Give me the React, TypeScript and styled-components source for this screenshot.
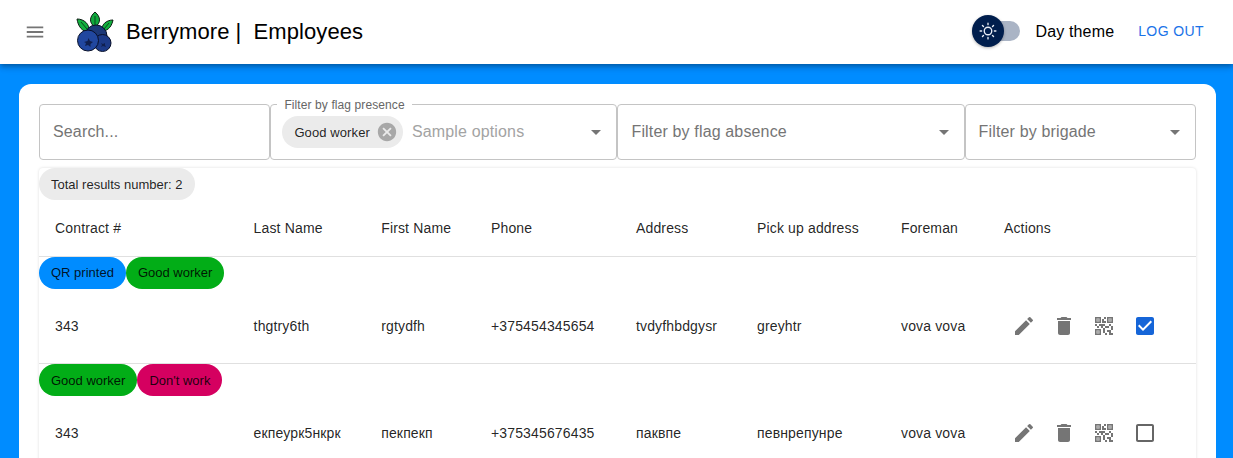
import React from "react";
import styled, { createGlobalStyle } from "styled-components";

const GlobalStyle = createGlobalStyle`
  html, body {
    margin: 0;
    height: 100%;
    overflow: hidden;
    background: #008cff;
    font-family: "Liberation Sans", Arial, sans-serif;
    color: rgba(0, 0, 0, 0.87);
  }
  * { box-sizing: border-box; }
`;

const Header = styled.header`
  position: relative;
  z-index: 2;
  height: 64px;
  display: flex;
  align-items: center;
  padding: 0 21px 0 24px;
  background: #fff;
  box-shadow: 0 2px 4px -1px rgba(0, 0, 0, 0.2), 0 4px 5px 0 rgba(0, 0, 0, 0.14), 0 1px 10px 0 rgba(0, 0, 0, 0.12);
`;
const MenuIcon = styled.svg`
  width: 22px;
  height: 22px;
  fill: #757575;
`;
const Logo = styled.svg`
  width: 38px;
  height: 42px;
  margin-left: 30px;
`;
const Title = styled.h1`
  margin: 0 0 0 12px;
  font-size: 22px;
  font-weight: 400;
  letter-spacing: 0.1px;
  word-spacing: -0.2px;
  white-space: pre;
  color: #000;
`;
const ThemeBlock = styled.div`
  margin-left: auto;
  display: flex;
  align-items: center;
`;
const Toggle = styled.div`
  position: relative;
  width: 48px;
  height: 20px;
  margin-bottom: 2px;
  border-radius: 10px;
  background: #aab4c5;
`;
const Knob = styled.div`
  position: absolute;
  left: 0;
  top: -6px;
  width: 32px;
  height: 32px;
  border-radius: 50%;
  background: #001e4d;
  display: flex;
  align-items: center;
  justify-content: center;
  box-shadow: 0 1px 3px rgba(0, 0, 0, 0.3);
`;
const ThemeLabel = styled.span`
  margin-left: 15px;
  font-size: 16px;
  letter-spacing: 0.15px;
  color: #000;
`;
const LogoutButton = styled.button`
  margin: 0 0 2px 16px;
  padding: 6px 8px;
  border: 0;
  background: none;
  font: 14px "Liberation Sans", Arial, sans-serif;
  letter-spacing: 0.4px;
  color: #1a73e8;
`;

const Card = styled.main`
  margin: 20px 17px 0 19px;
  padding: 20px;
  background: #fff;
  border-radius: 12px;
`;
const Filters = styled.div`
  display: grid;
  grid-template-columns: 2fr 3fr 3fr 2fr;
`;
const Field = styled.div`
  position: relative;
  height: 56px;
  display: flex;
  align-items: center;
  padding: 0 13px;
  border: 1px solid #c4c4c4;
  border-radius: 4px;
`;
const Placeholder = styled.span<{ $tight?: boolean }>`
  flex: 1;
  font-size: 16px;
  letter-spacing: 0.15px;
  color: ${(p) => (p.$tight ? "#a3a3a3" : "#757575")};
  margin-left: ${(p) => (p.$tight ? "9px" : "0")};
`;
const FloatLabel = styled.label`
  position: absolute;
  top: -7px;
  left: 6px;
  padding: 0 7px;
  background: #fff;
  font-size: 12px;
  line-height: 14px;
  letter-spacing: 0.1px;
  color: #666;
`;
const Caret = styled.svg`
  width: 24px;
  height: 24px;
  margin-right: -5px;
  fill: #757575;
`;
const SelectedChip = styled.div`
  display: flex;
  align-items: center;
  height: 32px;
  margin-left: -2px;
  padding: 0 5px 0 12px;
  border-radius: 16px;
  background: #ebebeb;
  font-size: 13px;
  letter-spacing: 0.1px;
  color: rgba(0, 0, 0, 0.87);
`;
const ChipClose = styled.svg`
  width: 22px;
  height: 22px;
  margin-left: 6px;
  fill: #a8a8a8;
`;

const TablePaper = styled.section`
  margin-top: 8px;
  border-radius: 4px;
  background: #fff;
  box-shadow: 0 0 3px rgba(0, 0, 0, 0.14);
`;
const ChipRow = styled.div`
  display: flex;
  height: 32px;
`;
const Chip = styled.span<{ $bg: string }>`
  display: flex;
  align-items: center;
  height: 32px;
  padding: 0 12px;
  border-radius: 16px;
  background: ${(p) => p.$bg};
  font-size: 13px;
  color: rgba(0, 0, 0, 0.87);
`;
const Table = styled.table`
  width: 100%;
  table-layout: fixed;
  border-collapse: collapse;
`;
const Col = styled.col<{ $w: number }>`
  width: ${(p) => p.$w}px;
`;
const HeadCell = styled.th`
  height: 56px;
  padding: 0 16px;
  text-align: left;
  font-size: 14px;
  font-weight: 400;
  letter-spacing: 0.15px;
  color: rgba(0, 0, 0, 0.87);
  border-bottom: 1px solid #e0e0e0;
`;
const ChipsCell = styled.td`
  height: 32px;
  padding: 0;
`;
const Cell = styled.td`
  height: 75px;
  padding: 0 16px;
  font-size: 14px;
  letter-spacing: 0.15px;
  color: rgba(0, 0, 0, 0.87);
  border-bottom: 1px solid #e0e0e0;
`;
const Actions = styled.div`
  display: flex;
  align-items: center;
  margin-left: 8px;
  gap: 16px;
`;
const ActionIcon = styled.svg`
  width: 24px;
  height: 24px;
  flex: none;
  fill: #757575;
`;
const CheckIcon = styled.svg<{ $on?: boolean }>`
  width: 24px;
  height: 24px;
  flex: none;
  margin-left: 1px;
  fill: ${(p) => (p.$on ? "#1565d8" : "#666")};
`;

const SunIcon = () => (
  <svg width="18" height="18" viewBox="0 0 24 24" fill="none" stroke="#e8edf5" strokeWidth="1.8" strokeLinecap="round">
    <circle cx="12" cy="12" r="5" />
    <path d="M12 1.5v2M12 20.5v2M1.5 12h2M20.5 12h2M4.6 4.6 6 6M18 18l1.4 1.4M4.6 19.4 6 18M18 6l1.4-1.4" />
  </svg>
);

const BerryLogo = () => (
  <Logo viewBox="0 0 38 42">
    <g stroke="#0c1a12" strokeWidth="1">
      <path d="M19 16C13 12 13 6 19 1c6 5 6 11 0 15z" fill="#0fa83c" />
      <path d="M13 21C6 21 2 15 1 8c7 0 13 5 12 13z" fill="#12b03f" />
      <path d="M26 20c7 0 10-6 11-11-7 0-12 5-11 11z" fill="#12b03f" />
      <path d="M19 15V5M11 18 5 11M28 18l5-6" fill="none" strokeWidth="0.7" />
    </g>
    <g stroke="#08102a" strokeWidth="1">
      <circle cx="20" cy="25" r="11" fill="#1c3878" />
      <circle cx="26.500" cy="32" r="8.500" fill="#1c3a88" />
      <circle cx="12" cy="29.500" r="10.500" fill="#21479f" />
    </g>
    <path d="M8 31l3.500-1 1-3 1.500 3 3 1-2.500 2v3l-2.500-2-3 1 1-3z" fill="#10204f" />
    <path d="M25 32l2 1 2-1v2l1 2-3-1-2 1 1-2z" fill="#10204f" />
  </Logo>
);

const CaretDown = () => (
  <Caret viewBox="0 0 24 24">
    <path d="M7 10l5 5 5-5z" />
  </Caret>
);

const editPath =
  "M3 17.25V21h3.75L17.81 9.94l-3.75-3.75L3 17.25zM20.71 7.04c.39-.39.39-1.02 0-1.41l-2.34-2.34a.9959.9959 0 0 0-1.41 0l-1.83 1.83 3.75 3.75 1.83-1.83z";
const deletePath = "M6 19c0 1.1.9 2 2 2h8c1.1 0 2-.9 2-2V7H6v12zM19 4h-3.5l-1-1h-5l-1 1H5v2h14V4z";
const checkedPath =
  "M19 3H5c-1.11 0-2 .9-2 2v14c0 1.1.89 2 2 2h14c1.1 0 2-.9 2-2V5c0-1.1-.9-2-2-2zm-9 14l-5-5 1.41-1.41L10 14.17l7.59-7.59L19 8l-9 9z";
const uncheckedPath =
  "M19 5v14H5V5h14m0-2H5c-1.1 0-2 .9-2 2v14c0 1.1.9 2 2 2h14c1.1 0 2-.9 2-2V5c0-1.1-.9-2-2-2z";
const qrPath =
  "M15 21h-2v-2h2v2zm-2-7h-2v5h2v-5zm8-2h-2v4h2v-4zm-2-2h-2v2h2v-2zM7 12H5v2h2v-2zm-2-2H3v2h2v-2zm7-5h2V3h-2v2z" +
  "M3 3h6v6H3zM4.500 4.500v3h3v-3z" +
  "M15 3h6v6h-6zM16.500 4.500v3h3v-3z" +
  "M3 15h6v6H3zM4.500 16.500v3h3v-3z" +
  "M19 19v-3h-4v2h2v3h4v-2h-2zm-2-7h-4v2h4v-2zm-4-2H7v2h2v2h2v-2h2v-2zm1-1V7h-2V5h-2v4h4z";
const qrInnerPath = "M4.500 4.500h3v3h-3zM16.500 4.500h3v3h-3zM4.500 16.500h3v3h-3z";

const columns = [198.6, 127.6, 109.8, 145, 121, 144, 103, 208];

type Row = {
  chips: { label: string; bg: string }[];
  cells: string[];
  checked: boolean;
};
const rows: Row[] = [
  {
    chips: [
      { label: "QR printed", bg: "#008cff" },
      { label: "Good worker", bg: "#02ad17" },
    ],
    cells: ["343", "thgtry6th", "rgtydfh", "+375454345654", "tvdyfhbdgysr", "greyhtr", "vova vova"],
    checked: true,
  },
  {
    chips: [
      { label: "Good worker", bg: "#02ad17" },
      { label: "Don't work", bg: "#d50060" },
    ],
    cells: ["343", "екпеурк5нкрк", "пекпекп", "+375345676435", "паквпе", "певнрепунре", "vova vova"],
    checked: false,
  },
];
const headers = ["Contract #", "Last Name", "First Name", "Phone", "Address", "Pick up address", "Foreman", "Actions"];

const App: React.FC = () => (
  <>
    <GlobalStyle />
    <Header>
      <MenuIcon viewBox="0 0 24 24">
        <path d="M3 18h18v-2H3v2zm0-5h18v-2H3v2zm0-7v2h18V6H3z" />
      </MenuIcon>
      <BerryLogo />
      <Title>Berrymore |  Employees</Title>
      <ThemeBlock>
        <Toggle>
          <Knob>
            <SunIcon />
          </Knob>
        </Toggle>
        <ThemeLabel>Day theme</ThemeLabel>
        <LogoutButton>LOG OUT</LogoutButton>
      </ThemeBlock>
    </Header>
    <Card>
      <Filters>
        <Field>
          <Placeholder>Search...</Placeholder>
        </Field>
        <Field>
          <FloatLabel>Filter by flag presence</FloatLabel>
          <SelectedChip>
            Good worker
            <ChipClose viewBox="0 0 24 24">
              <path d="M12 2C6.470 2 2 6.470 2 12s4.470 10 10 10 10-4.470 10-10S17.530 2 12 2zm5 13.590L15.590 17 12 13.410 8.410 17 7 15.590 10.590 12 7 8.410 8.410 7 12 10.590 15.590 7 17 8.410 13.410 12 17 15.590z" />
            </ChipClose>
          </SelectedChip>
          <Placeholder $tight>Sample options</Placeholder>
          <CaretDown />
        </Field>
        <Field>
          <Placeholder>Filter by flag absence</Placeholder>
          <CaretDown />
        </Field>
        <Field>
          <Placeholder>Filter by brigade</Placeholder>
          <CaretDown />
        </Field>
      </Filters>
      <TablePaper>
        <ChipRow>
          <Chip $bg="#ebebeb">Total results number: 2</Chip>
        </ChipRow>
        <Table>
          <colgroup>
            {columns.map((w, i) => (
              <Col key={i} $w={w} />
            ))}
          </colgroup>
          <thead>
            <tr>
              {headers.map((h) => (
                <HeadCell key={h}>{h}</HeadCell>
              ))}
            </tr>
          </thead>
          <tbody>
            {rows.map((row, i) => (
              <React.Fragment key={i}>
                <tr>
                  <ChipsCell colSpan={8}>
                    <ChipRow>
                      {row.chips.map((c) => (
                        <Chip key={c.label} $bg={c.bg}>
                          {c.label}
                        </Chip>
                      ))}
                    </ChipRow>
                  </ChipsCell>
                </tr>
                <tr>
                  {row.cells.map((c, j) => (
                    <Cell key={j}>{c}</Cell>
                  ))}
                  <Cell>
                    <Actions>
                      <ActionIcon viewBox="0 0 24 24">
                        <path d={editPath} />
                      </ActionIcon>
                      <ActionIcon viewBox="0 0 24 24">
                        <path d={deletePath} />
                      </ActionIcon>
                      <ActionIcon viewBox="0 0 24 24">
                        <path d={qrPath} fillRule="evenodd" />
                        <path d={qrInnerPath} fillOpacity={0.6} />
                      </ActionIcon>
                      <CheckIcon viewBox="0 0 24 24" $on={row.checked}>
                        <path d={row.checked ? checkedPath : uncheckedPath} />
                      </CheckIcon>
                    </Actions>
                  </Cell>
                </tr>
              </React.Fragment>
            ))}
          </tbody>
        </Table>
      </TablePaper>
    </Card>
  </>
);

export default App;
